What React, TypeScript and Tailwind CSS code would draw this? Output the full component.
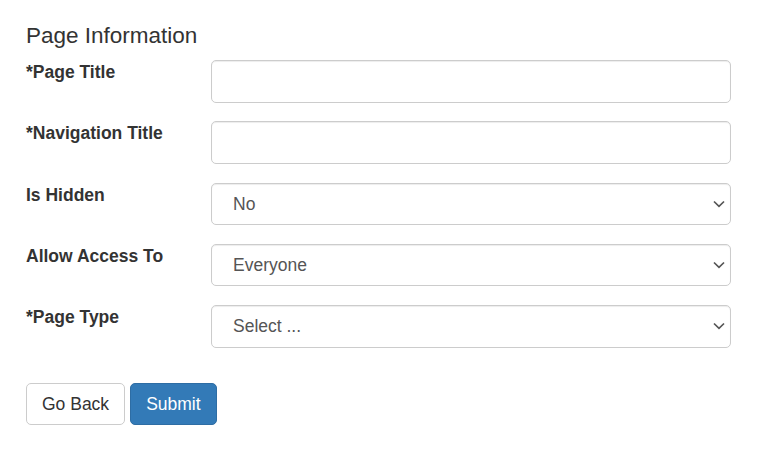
import React from "react";

const Chevron = () => (
  <svg
    className="pointer-events-none absolute right-[6px] top-1/2 -translate-y-1/2"
    width="12"
    height="8"
    viewBox="0 0 12 8"
    fill="none"
  >
    <path d="M1 1.5 L6 6.3 L11 1.5" stroke="#555" strokeWidth="1.7" />
  </svg>
);

function Row({ label, children }: { label: string; children: React.ReactNode }) {
  return (
    <div className="flex items-start mb-[18.75px]">
      <label className="w-[185px] shrink-0 font-bold text-[17.5px] leading-[25px] text-[#333]">
        {label}
      </label>
      <div className="w-[520px]">{children}</div>
    </div>
  );
}

const fieldCls =
  "block w-full h-[42.5px] border border-[#ccc] rounded-[5px] bg-white text-[17.5px] text-[#555] shadow-[inset_0_1px_1px_rgba(0,0,0,0.075)] outline-none";

function Select({ value, options }: { value: string; options: string[] }) {
  return (
    <div className="relative">
      <select defaultValue={value} className={`${fieldCls} appearance-none pl-[21px] pr-8`}>
        {options.map((o) => (
          <option key={o}>{o}</option>
        ))}
      </select>
      <Chevron />
    </div>
  );
}

export default function App() {
  return (
    <div
      className="bg-white min-h-[454px] pl-[26px] pt-[24px] text-[#333]"
      style={{ fontFamily: '"Liberation Sans", Arial, sans-serif' }}
    >
      <h4 className="text-[22.5px] leading-[24.75px] font-normal mb-[11.25px]">Page Information</h4>
      <Row label="*Page Title">
        <input className={`${fieldCls} px-[15px]`} />
      </Row>
      <Row label="*Navigation Title">
        <input className={`${fieldCls} px-[15px]`} />
      </Row>
      <Row label="Is Hidden">
        <Select value="No" options={["No", "Yes"]} />
      </Row>
      <Row label="Allow Access To">
        <Select value="Everyone" options={["Everyone"]} />
      </Row>
      <Row label="*Page Type">
        <Select value="Select ..." options={["Select ..."]} />
      </Row>
      <div className="flex gap-[5px] pt-[17px]">
        <button className="h-[42px] px-[15px] border border-[#ccc] rounded-[5px] bg-white text-[17.5px] text-[#333]">
          Go Back
        </button>
        <button className="h-[42px] px-[15px] border border-[#2e6da4] rounded-[5px] bg-[#337ab7] text-[17.5px] text-white">
          Submit
        </button>
      </div>
    </div>
  );
}
